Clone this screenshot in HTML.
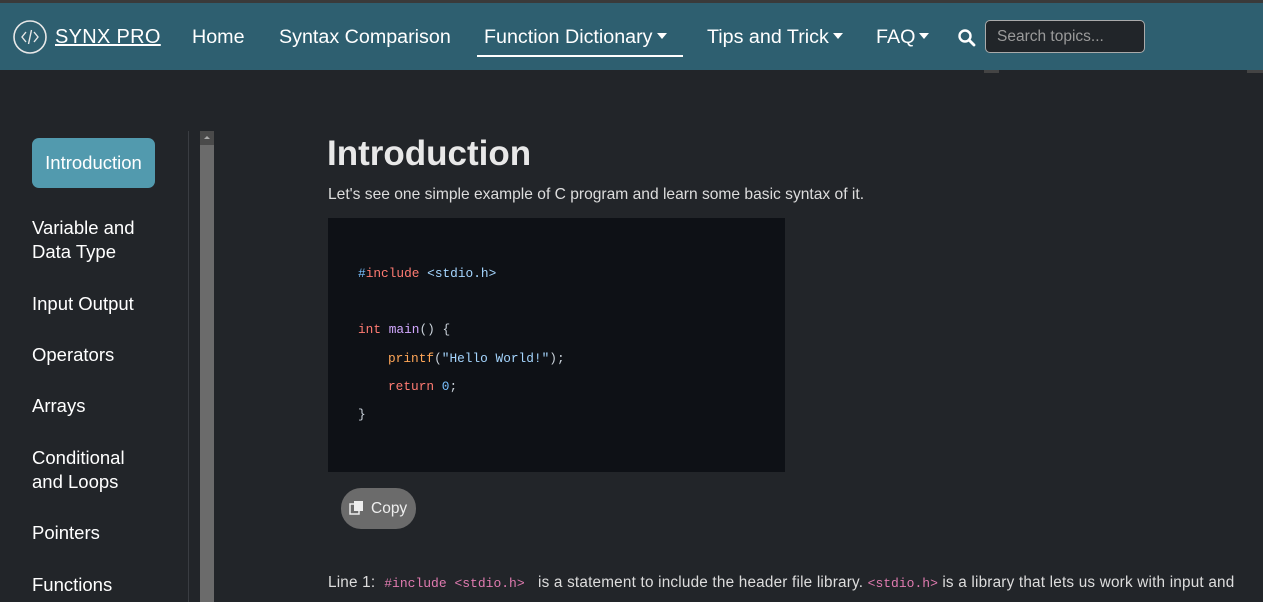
<!DOCTYPE html>
<html><head><meta charset="utf-8"><style>
*{margin:0;padding:0;box-sizing:border-box}
body{width:1263px;height:602px;overflow:hidden;background:#222529;font-family:"Liberation Sans",sans-serif;color:#e8e8e8;position:relative}
.top{position:absolute;left:0;top:0;width:1263px;height:3px;background:#3a3a3a}
nav{position:absolute;left:0;top:3px;width:1263px;height:67px;background:#2e5f70}
.n{position:absolute;top:23px;font-size:19.7px;color:#fff;white-space:nowrap}
.car{display:inline-block;width:0;height:0;border-left:5px solid transparent;border-right:5px solid transparent;border-top:6px solid #fff;vertical-align:4px;margin-left:4px}
.side{position:absolute;left:32px;font-size:18.5px;color:#fff;line-height:24px}
.code{position:absolute;left:328px;top:218px;width:457px;height:254px;background:#0e1116;font-family:"Liberation Mono",monospace;font-size:12.8px;color:#c9d1d9}
.code div{position:absolute;white-space:pre}
.r{color:#ff7b72}.b{color:#79c0ff}.o{color:#ffa657}.p{color:#d2a8ff}.s{color:#a5d6ff}
</style></head><body>
<div class="top"></div>
<nav>
<svg style="position:absolute;left:12px;top:16px" width="36" height="36" viewBox="0 0 36 36"><circle cx="18" cy="18" r="16" fill="none" stroke="#e8e8e8" stroke-width="1.6"/><path d="M14 13l-4 5 4 5M22 13l4 5-4 5M19.5 11l-3 14" fill="none" stroke="#e8e8e8" stroke-width="1.4"/></svg>
<div class="n" style="left:55px;text-decoration:underline;font-size:20px;letter-spacing:0.3px">SYNX PRO</div>
<div class="n" style="left:192px">Home</div>
<div class="n" style="left:279px">Syntax Comparison</div>
<div class="n" style="left:484px">Function Dictionary<span class="car"></span></div>
<div style="position:absolute;left:477px;top:52px;width:206px;height:2px;background:#fff"></div>
<div class="n" style="left:707px">Tips and Trick<span class="car"></span></div>
<div class="n" style="left:876px">FAQ<span class="car"></span></div>
<svg style="position:absolute;left:957px;top:25px" width="20" height="20" viewBox="0 0 20 20"><circle cx="8" cy="8" r="5.5" fill="none" stroke="#fff" stroke-width="2.4"/><path d="M12 12l5 5" stroke="#fff" stroke-width="2.8" stroke-linecap="round"/></svg>
<div style="position:absolute;left:985px;top:17px;width:160px;height:33px;background:#212529;border:1px solid #aaa;border-radius:5px;color:#9a9a9a;font-size:15.5px;padding:7px 0 0 11px">Search topics...</div>
</nav>
<div style="position:absolute;left:984px;top:70px;width:15px;height:3px;background:#444"></div>
<div style="position:absolute;left:1247px;top:70px;width:16px;height:3px;background:#444"></div>
<div style="position:absolute;left:32px;top:138px;width:123px;height:50px;background:#529aae;border-radius:7px;color:#fff;font-size:18.5px;padding-top:14px;text-align:center">Introduction</div>
<div class="side" style="top:216px">Variable and<br>Data Type</div>
<div class="side" style="top:292px">Input Output</div>
<div class="side" style="top:343px">Operators</div>
<div class="side" style="top:394px">Arrays</div>
<div class="side" style="top:446px">Conditional<br>and Loops</div>
<div class="side" style="top:521px">Pointers</div>
<div class="side" style="top:573px">Functions</div>
<div style="position:absolute;left:188px;top:131px;width:1px;height:471px;background:#3a3d42"></div>
<div style="position:absolute;left:200px;top:131px;width:14px;height:471px;background:#6b6b6b"></div>
<div style="position:absolute;left:200px;top:131px;width:14px;height:14px;background:#4a4a4a"></div>
<div style="position:absolute;left:204px;top:136px;border-left:3px solid transparent;border-right:3px solid transparent;border-bottom:3px solid #aaa"></div>
<div style="position:absolute;left:327px;top:134px;font-size:35px;font-weight:bold;color:#e8e8e8">Introduction</div>
<div style="position:absolute;left:328px;top:186px;font-size:15.6px;color:#ddd">Let's see one simple example of C program and learn some basic syntax of it.</div>
<div class="code">
<div style="left:30px;top:48px"><span class="b">#</span><span class="r">include</span> <span class="s">&lt;stdio.h&gt;</span></div>
<div style="left:30px;top:104px"><span class="r">int</span> <span class="p">main</span>() {</div>
<div style="left:60px;top:133px"><span class="o">printf</span>(<span class="s">"Hello World!"</span>);</div>
<div style="left:60px;top:161px"><span class="r">return</span> <span class="b">0</span>;</div>
<div style="left:30px;top:189px">}</div>
</div>
<div style="position:absolute;left:341px;top:488px;width:75px;height:41px;background:#6b6b6b;border-radius:20px;color:#eee;font-size:15.5px;padding:12px 0 0 30px">Copy</div>
<svg style="position:absolute;left:349px;top:500px" width="16" height="16" viewBox="0 0 16 16"><rect x="1" y="4" width="9" height="10" fill="none" stroke="#eee" stroke-width="1.5"/><rect x="5" y="1" width="9" height="10" fill="#eee"/></svg>
<div style="position:absolute;left:328px;top:574px;font-size:15.3px;color:#ddd;white-space:nowrap;letter-spacing:0.2px">Line 1: &nbsp;<span style="font-family:'Liberation Mono',monospace;font-size:13px;color:#e07bb0;letter-spacing:0">#include &lt;stdio.h&gt;</span> &nbsp; is a statement to include the header file library. <span style="font-family:'Liberation Mono',monospace;font-size:13px;color:#e07bb0;letter-spacing:0">&lt;stdio.h&gt;</span> is a library that lets us work with input and</div>
</body></html>
